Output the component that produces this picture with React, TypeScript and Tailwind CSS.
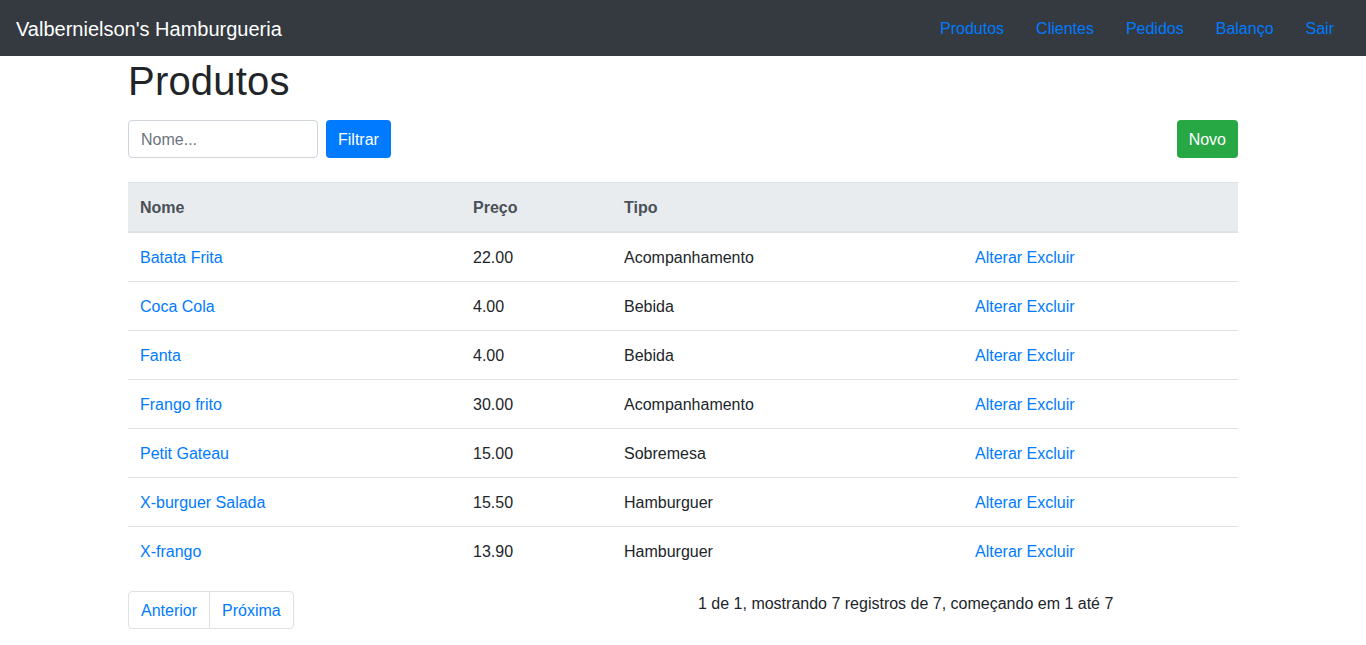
import React, { useState } from 'react';

type Produto = {
  nome: string;
  preco: string;
  tipo: string;
};

const produtos: Produto[] = [
  { nome: 'Batata Frita', preco: '22.00', tipo: 'Acompanhamento' },
  { nome: 'Coca Cola', preco: '4.00', tipo: 'Bebida' },
  { nome: 'Fanta', preco: '4.00', tipo: 'Bebida' },
  { nome: 'Frango frito', preco: '30.00', tipo: 'Acompanhamento' },
  { nome: 'Petit Gateau', preco: '15.00', tipo: 'Sobremesa' },
  { nome: 'X-burguer Salada', preco: '15.50', tipo: 'Hamburguer' },
  { nome: 'X-frango', preco: '13.90', tipo: 'Hamburguer' },
];

const links = ['Produtos', 'Clientes', 'Pedidos', 'Balanço', 'Sair'];

export default function App() {
  const [filtro, setFiltro] = useState<string>('');

  return (
    <div className="min-h-screen bg-white font-['Liberation_Sans',Arial,sans-serif] text-base leading-6 text-[#212529]">
      {/* navbar */}
      <nav className="flex h-14 items-center justify-between bg-[#343a40] pl-4 pr-4">
        <a href="#" className="pt-px text-xl leading-[30px] text-white">
          Valbernielson's Hamburgueria
        </a>
        <ul className="flex">
          {links.map((l) => (
            <li key={l}>
              <a href="#" className="block px-4 pt-[9px] pb-[7px] text-[#007bff]">
                {l}
              </a>
            </li>
          ))}
        </ul>
      </nav>

      <div className="mx-auto w-[1140px] px-[15px]">
        <h1 className="mb-4 pt-[2px] text-[40px] font-medium leading-[46px] tracking-[0.2px]">Produtos</h1>

        {/* filtro */}
        <div className="mb-6 flex items-center justify-between">
          <div className="flex items-center gap-2">
            <input
              value={filtro}
              onChange={(e) => setFiltro(e.target.value)}
              placeholder="Nome..."
              className="h-[38px] w-[190px] rounded border border-[#ced4da] px-3 pt-[2px] text-[#495057] placeholder:text-[#6c757d] outline-none"
            />
            <button className="h-[38px] rounded bg-[#007bff] px-3 pt-[2px] text-white">
              Filtrar
            </button>
          </div>
          <button className="h-[38px] rounded bg-[#28a745] px-3 pt-[2px] text-white">
            Novo
          </button>
        </div>

        {/* tabela */}
        <table className="mb-4 w-full border-collapse text-left">
          <thead className="bg-[#e9ecef] text-[#495057]">
            <tr>
              <th className="w-[333px] border-t border-b-2 border-[#dee2e6] px-3 pt-[13px] pb-[11px] font-bold">Nome</th>
              <th className="w-[151px] border-t border-b-2 border-[#dee2e6] px-3 pt-[13px] pb-[11px] font-bold">Preço</th>
              <th className="w-[351px] border-t border-b-2 border-[#dee2e6] px-3 pt-[13px] pb-[11px] font-bold">Tipo</th>
              <th className="border-t border-b-2 border-[#dee2e6] p-3"></th>
            </tr>
          </thead>
          <tbody>
            {produtos.map((p) => (
              <tr key={p.nome}>
                <td className="border-t border-[#dee2e6] px-3 pt-[13px] pb-[11px]">
                  <a href="#" className="text-[#007bff]">{p.nome}</a>
                </td>
                <td className="border-t border-[#dee2e6] px-3 pt-[13px] pb-[11px]">{p.preco}</td>
                <td className="border-t border-[#dee2e6] px-3 pt-[13px] pb-[11px]">{p.tipo}</td>
                <td className="border-t border-[#dee2e6] px-3 pt-[13px] pb-[11px]">
                  <a href="#" className="text-[#007bff]">Alterar</a>{' '}
                  <a href="#" className="text-[#007bff]">Excluir</a>
                </td>
              </tr>
            ))}
          </tbody>
        </table>

        {/* paginacao */}
        <div className="flex">
          <div className="w-[555px]">
            <ul className="flex">
              <li>
                <a href="#" className="block rounded-l border border-[#dee2e6] px-3 pt-[9px] pb-[7px] leading-5 text-[#007bff]">
                  Anterior
                </a>
              </li>
              <li>
                <a href="#" className="-ml-px block rounded-r border border-[#dee2e6] px-3 pt-[9px] pb-[7px] leading-5 text-[#007bff]">
                  Próxima
                </a>
              </li>
            </ul>
          </div>
          <div className="w-[555px] pl-[15px]">
            <p className="pt-px">1 de 1, mostrando 7 registros de 7, começando em 1 até 7</p>
          </div>
        </div>
      </div>
    </div>
  );
}
